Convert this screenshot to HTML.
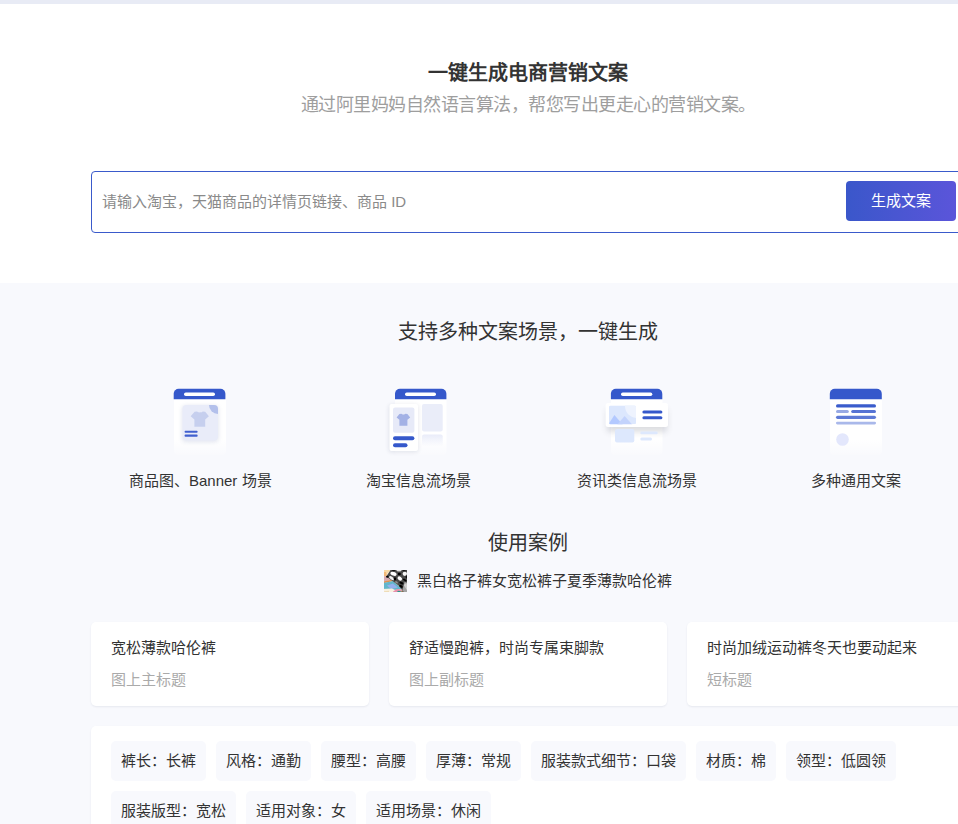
<!DOCTYPE html>
<html lang="zh-CN">
<head>
<meta charset="utf-8">
<title>一键生成电商营销文案</title>
<style>
*{box-sizing:border-box;margin:0;padding:0}
html,body{width:958px;height:824px;overflow:hidden;background:#fff}
body{font-family:"Liberation Sans",sans-serif;color:#333;position:relative;-webkit-font-smoothing:antialiased}
.abs{position:absolute}
.topbar{left:0;top:0;width:958px;height:4px;background:#e8ebf5}
.center{left:91px;width:874px;text-align:center;white-space:nowrap}
.h1{top:59px;height:28px;line-height:28px;font-size:20px;font-weight:bold;color:#333}
.sub{top:91px;height:28px;line-height:28px;font-size:18px;letter-spacing:-0.5px;color:#9e9e9e}
.inputbox{left:91px;top:171px;width:880px;height:62px;border:1px solid #3a5acb;border-radius:4px;background:#fff}
.ph{left:102px;top:191px;height:22px;line-height:22px;font-size:15px;color:#8a8a8a;white-space:nowrap}
.btn{left:846px;top:181px;width:110px;height:40px;border-radius:4px;background:linear-gradient(90deg,#3a57ca 0%,#5b55da 100%);color:#fff;font-size:15px;line-height:40px;text-align:center}
.gray{left:0;top:283px;width:958px;height:541px;background:#f8f9fd}
.h2{font-size:20px;height:28px;line-height:28px;color:#333}
.lab{font-size:15px;height:22px;line-height:22px;color:#333;text-align:center;white-space:nowrap;width:218.5px}
.ico{top:375px;width:80px;height:90px}
.pname{left:417px;top:570px;height:22px;line-height:22px;font-size:15px;color:#333;white-space:nowrap}
.card{top:622px;width:278px;height:84px;background:#fff;border-radius:5px;box-shadow:0 1px 2px rgba(30,40,80,.08)}
.card .t{position:absolute;left:19.500px;top:15px;height:22px;line-height:22px;font-size:15px;color:#333;white-space:nowrap}
.card .s{position:absolute;left:19.500px;top:47px;height:22px;line-height:22px;font-size:15px;color:#aaa;white-space:nowrap}
.panel{left:91px;top:726px;width:874px;height:120px;background:#fff;border-radius:5px;box-shadow:0 1px 2px rgba(30,40,80,.08)}
.tag{position:absolute;height:40px;line-height:40px;padding:0;text-align:center;background:#f8f9fd;border-radius:5px;font-size:15px;color:#333;white-space:nowrap}
</style>
</head>
<body>
<div class="abs topbar"></div>
<div class="abs center h1">一键生成电商营销文案</div>
<div class="abs center sub">通过阿里妈妈自然语言算法，帮您写出更走心的营销文案。</div>

<div class="abs inputbox"></div>
<div class="abs ph">请输入淘宝，天猫商品的详情页链接、商品 ID</div>
<div class="abs btn">生成文案</div>

<div class="abs gray"></div>
<div class="abs center h2" style="top:318px">支持多种文案场景，一键生成</div>


<!-- icon 1 : product image / banner -->
<svg class="abs ico" style="left:160px" width="80" height="90" viewBox="160 375 80 90">
<defs>
<linearGradient id="fade" x1="0" y1="0" x2="0" y2="1"><stop offset="0" stop-color="#fff" stop-opacity="1"/><stop offset=".72" stop-color="#fff" stop-opacity="1"/><stop offset="1" stop-color="#fff" stop-opacity=".15"/></linearGradient>
<filter id="sh" x="-30%" y="-30%" width="160%" height="160%"><feGaussianBlur stdDeviation="2.2"/></filter>
<filter id="sh3" x="-30%" y="-50%" width="160%" height="200%"><feGaussianBlur stdDeviation="3.2"/></filter>
<filter id="sh1" x="-30%" y="-30%" width="160%" height="160%"><feGaussianBlur stdDeviation="1.2"/></filter>
<clipPath id="c1"><rect x="182.5" y="405" width="35.5" height="35.5" rx="4"/></clipPath>
</defs>
<path d="M174 398h52v53a4 4 0 0 1-4 4h-44a4 4 0 0 1-4-4z" fill="url(#fade)"/>
<path d="M173.7 399.3v-5.500a5 5 0 0 1 5-5h41.700a5 5 0 0 1 5 5v5.500z" fill="#3558cb"/>
<rect x="184" y="392.5" width="31" height="3.5" rx="1.75" fill="#fff"/>
<rect x="182" y="405.5" width="36.5" height="36.5" rx="4" fill="#7080b0" opacity=".2" filter="url(#sh)"/>
<rect x="182.5" y="405" width="35.5" height="35.5" rx="4" fill="#e9ecf9"/>
<circle cx="218" cy="405" r="9" fill="#b3c0eb" clip-path="url(#c1)"/>
<path d="M194.6 411.8l2.6-.3c.8 1.2 4.600 1.200 5.400 0l2.600 .3l3.700 4.500l-3.700 3.200v7.300h-10.800v-7.300l-3.700-3.200z" fill="#c6cfee"/>
<rect x="184.600" y="430.700" width="13" height="2.100" rx=".8" fill="#4160cf"/>
<rect x="184.600" y="434.500" width="13" height="2.200" rx=".8" fill="#4160cf"/>
</svg>

<!-- icon 2 : taobao feed -->
<svg class="abs ico" style="left:378px" width="80" height="90" viewBox="378 375 80 90">
<defs><linearGradient id="fade2" x1="0" y1="0" x2="0" y2="1"><stop offset="0" stop-color="#e9ecf9" stop-opacity="1"/><stop offset="1" stop-color="#e9ecf9" stop-opacity="0"/></linearGradient></defs>
<path d="M395 398h51.500v53a4 4 0 0 1-4 4h-43.500a4 4 0 0 1-4-4z" fill="url(#fade)"/>
<path d="M395 399.300v-5.500a5 5 0 0 1 5-5h41.400a5 5 0 0 1 5 5v5.500z" fill="#3558cb"/>
<rect x="405" y="392.500" width="31" height="3.500" rx="1.750" fill="#fff"/>
<rect x="422" y="404" width="20.700" height="27.600" rx="2" fill="#eaedf9"/>
<rect x="422" y="434.600" width="20.700" height="12" rx="2" fill="url(#fade2)"/>
<rect x="389" y="405" width="29" height="47" rx="2" fill="#50587a" opacity=".16" filter="url(#sh)"/>
<rect x="389.500" y="404" width="28.500" height="47" rx="2" fill="#fff"/>
<rect x="393" y="407.600" width="21.400" height="25.100" rx="2" fill="#e7eaf8"/>
<path d="M399.400 414l2-.2c.6 .9 3.400 .9 4 0l2 .2l2.800 3.400l-2.800 2.400v6h-8v-6l-2.800-2.400z" fill="#a3b1e5"/>
<rect x="393" y="436.200" width="21.400" height="4" rx="2" fill="#3558cb"/>
<rect x="393" y="443.200" width="14.500" height="4" rx="2" fill="#3558cb"/>
</svg>

<!-- icon 3 : news feed -->
<svg class="abs ico" style="left:596px" width="80" height="90" viewBox="596 375 80 90">
<defs><clipPath id="c3"><rect x="609" y="405.400" width="27" height="18.800" rx="1.500"/></clipPath></defs>
<path d="M611 398h51.500v53a4 4 0 0 1-4 4h-43.500a4 4 0 0 1-4-4z" fill="url(#fade)"/>
<path d="M610.900 399.300v-5.500a5 5 0 0 1 5-5h41.400a5 5 0 0 1 5 5v5.500z" fill="#3558cb"/>
<rect x="621" y="392.500" width="31.300" height="3.500" rx="1.750" fill="#fff"/>
<rect x="607" y="409" width="60" height="23" rx="3" fill="#30344a" opacity=".17" filter="url(#sh3)"/>
<rect x="615" y="429" width="19.300" height="13.400" rx="2" fill="#dde8fd"/>
<rect x="640.300" y="431.600" width="17.400" height="2.700" rx="1.350" fill="#dde8fd"/>
<rect x="640.300" y="437.600" width="11.700" height="3" rx="1.500" fill="#dde8fd"/>
<rect x="605.600" y="403" width="62.400" height="24" rx="2.500" fill="#fff"/>
<g clip-path="url(#c3)">
<rect x="609" y="405.400" width="27" height="18.800" fill="#dce7fd"/>
<circle cx="637" cy="406" r="12" fill="#eef3fe"/>
<path d="M608 425l6.400-10l8.600 10z" fill="#b3c9ff"/>
<path d="M617 425l7.600-9l8 9z" fill="#c3d3fc"/>
</g>
<rect x="642.400" y="410.500" width="20" height="3" rx="1.500" fill="#3558cb"/>
<rect x="642.400" y="416.300" width="20" height="3" rx="1.500" fill="#3558cb"/>
</svg>

<!-- icon 4 : generic copy -->
<svg class="abs ico" style="left:816px" width="80" height="90" viewBox="816 375 80 90">
<path d="M830 398h52v53a4 4 0 0 1-4 4h-44a4 4 0 0 1-4-4z" fill="url(#fade)"/>
<path d="M829.800 399.300v-5.500a5 5 0 0 1 5-5h42a5 5 0 0 1 5 5v5.500z" fill="#3558cb"/>
<rect x="836" y="404.300" width="40" height="3.200" rx="1.600" fill="#3a5ccc"/>
<rect x="836" y="410" width="12.800" height="3" rx="1.500" fill="#97a9e4"/>
<rect x="851.200" y="410" width="24.800" height="3" rx="1.500" fill="#5673d4"/>
<rect x="836" y="415.700" width="40" height="3.200" rx="1.600" fill="#5e7ad6"/>
<rect x="836" y="421.700" width="40" height="2.700" rx="1.350" fill="#a9b8ea"/>
<circle cx="842.500" cy="439.500" r="6.300" fill="#e3e7fc"/>
</svg>


<div class="abs lab" style="left:91px;top:470px">商品图、Banner 场景</div>
<div class="abs lab" style="left:309.5px;top:470px">淘宝信息流场景</div>
<div class="abs lab" style="left:528px;top:470px">资讯类信息流场景</div>
<div class="abs lab" style="left:746.5px;top:470px">多种通用文案</div>

<div class="abs center h2" style="top:529px">使用案例</div>
<svg class="abs" style="left:384px;top:570px" width="23" height="22" viewBox="0 0 23 22">
<defs><clipPath id="tc"><rect width="23" height="22"/></clipPath><filter id="tb" x="-20%" y="-20%" width="140%" height="140%"><feGaussianBlur stdDeviation=".6"/></filter></defs>
<g clip-path="url(#tc)"><g filter="url(#tb)">
<rect x="-3" y="-3" width="29" height="28" fill="#f4ecdc"/>
<path d="M-3-3h12l-6 7l-6 3z" fill="#f7d9a6"/>
<path d="M-3 2l5 0l1 4l-6 1z" fill="#f2b878"/>
<path d="M-3 6.500l6-.5l5 4l-11 2z" fill="#d6aab0"/>
<path d="M-3 12l11-2.300l1.500 1.300l-12.500 2.800z" fill="#e09050"/>
<path d="M-3 13.500l12-2.500l9 8l-8 1l-13-1z" fill="#62b6cb"/>
<path d="M3 15.500l6-2l5 4l-7 1.500z" fill="#94b0ee"/>
<path d="M-3 19l11-.5l4 2l-2 4.500h-13z" fill="#f8f1e0"/>
<path d="M-1 21.300l6-.5l0 3h-6z" fill="#eedcb8"/>
<path d="M9 21.500l4-2.500l5 .5l-1 2l-6 2z" fill="#e78fab"/>
<path d="M11.500 22.800l3-2l2.500 .5l-1 2.500z" fill="#2a9a8b"/>
<path d="M17.500 20.500l4 .5v3h-5z" fill="#8c6d55"/>
<path d="M8.500-3h18v28h-4.500l-7.500-9.500l-6-4.500l-6.200-4.500z" fill="#4a4a4a"/>
<path d="M20.500 12l5 1v12h-4l-3-5z" fill="#a4a4a4"/>
<path d="M19.800 15l2.500-2l1.500 4l-1 3z" fill="#cfcfcf"/>
<ellipse cx="9.500" cy="3.800" rx="3.200" ry="1.900" fill="#fff" transform="rotate(18 9.500 3.800)"/>
<ellipse cx="7.600" cy="8.100" rx="2.900" ry="1.400" fill="#f2f2f2" transform="rotate(32 7.600 8.100)"/>
<ellipse cx="15.800" cy="8.500" rx="2.400" ry="1.800" fill="#fff" transform="rotate(35 15.800 8.500)"/>
<ellipse cx="20.800" cy="3.800" rx="2.200" ry="2.100" fill="#f6f6f6"/>
<ellipse cx="15" cy=".3" rx="2.600" ry="1.300" fill="#e8e8e8"/>
<ellipse cx="12.500" cy="12.300" rx="1.600" ry="1" fill="#8d8d8d" transform="rotate(35 12.500 12.300)"/>
<ellipse cx="15.400" cy="4" rx="1.500" ry="1.300" fill="#000"/>
<ellipse cx="3.300" cy="6.800" rx="1.300" ry="1" fill="#050505"/>
<ellipse cx="10.900" cy="8.800" rx="1.300" ry="1.600" fill="#000"/>
<ellipse cx="20.800" cy="10" rx="2" ry="1" fill="#000" transform="rotate(30 20.800 10)"/>
<ellipse cx="17.500" cy="13" rx="2.200" ry="1.200" fill="#000" transform="rotate(30 17.500 13)"/>
<ellipse cx="17" cy="16.300" rx="2" ry="1.200" fill="#050505" transform="rotate(35 17 16.300)"/>
<ellipse cx="9.600" cy=".3" rx="1.600" ry=".9" fill="#111"/>
<ellipse cx="20.200" cy=".3" rx="1.500" ry=".9" fill="#1a1a1a"/>
<ellipse cx="22.500" cy="7" rx=".9" ry="1.400" fill="#0c0c0c"/>
</g></g></svg>
<div class="abs pname">黑白格子裤女宽松裤子夏季薄款哈伦裤</div>

<div class="abs card" style="left:91px"><div class="t">宽松薄款哈伦裤</div><div class="s">图上主标题</div></div>
<div class="abs card" style="left:389px"><div class="t">舒适慢跑裤，时尚专属束脚款</div><div class="s">图上副标题</div></div>
<div class="abs card" style="left:687px"><div class="t">时尚加绒运动裤冬天也要动起来</div><div class="s">短标题</div></div>

<div class="abs panel">
<div class="tag" style="left:20px;top:15px;width:95px">裤长：长裤</div>
<div class="tag" style="left:125px;top:15px;width:95px">风格：通勤</div>
<div class="tag" style="left:230px;top:15px;width:95px">腰型：高腰</div>
<div class="tag" style="left:335px;top:15px;width:95px">厚薄：常规</div>
<div class="tag" style="left:440px;top:15px;width:155px">服装款式细节：口袋</div>
<div class="tag" style="left:605px;top:15px;width:80px">材质：棉</div>
<div class="tag" style="left:695px;top:15px;width:110px">领型：低圆领</div>
<div class="tag" style="left:20px;top:65px;width:125px">服装版型：宽松</div>
<div class="tag" style="left:155px;top:65px;width:110px">适用对象：女</div>
<div class="tag" style="left:275px;top:65px;width:125px">适用场景：休闲</div>
</div>
</body>
</html>
